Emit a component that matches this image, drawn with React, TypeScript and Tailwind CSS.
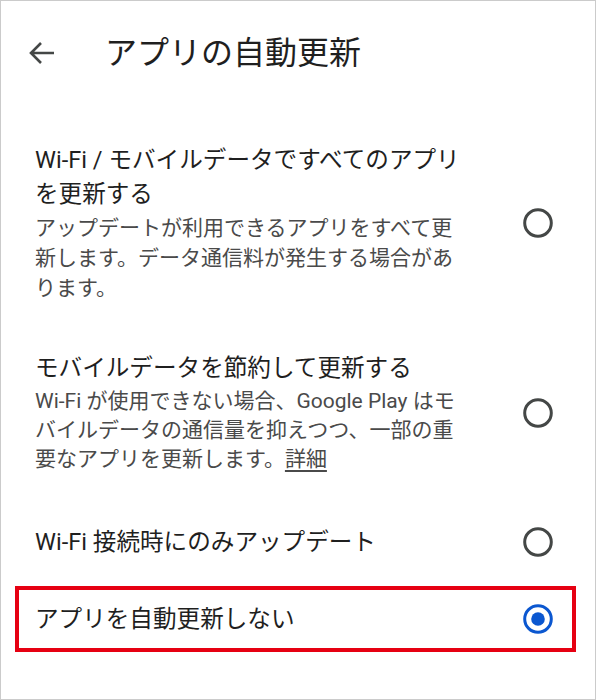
import React from 'react';

const font = { fontFamily: 'Roboto, "Noto Sans CJK JP", sans-serif' };

const Radio: React.FC<{ checked?: boolean }> = ({ checked }) => (
  <svg width="30" height="30" viewBox="0 0 30 30" className="shrink-0">
    {checked ? (
      <>
        <circle cx="15" cy="15" r="13.3" fill="none" stroke="#0b57d0" strokeWidth="3" />
        <circle cx="15" cy="15" r="6.8" fill="#0b57d0" />
      </>
    ) : (
      <circle cx="15" cy="15" r="13.3" fill="none" stroke="#444746" strokeWidth="3" />
    )}
  </svg>
);

interface Option {
  title: string[];
  desc?: React.ReactNode[];
  descLh?: string;
}

const options: Option[] = [
  {
    title: ['Wi-Fi / モバイルデータですべてのアプリ', 'を更新する'],
    desc: ['アップデートが利用できるアプリをすべて更', '新します。データ通信料が発生する場合があ', 'ります。'],
    descLh: 'leading-[30px]',
  },
  {
    title: ['モバイルデータを節約して更新する'],
    desc: [
      'Wi-Fi が使用できない場合、Google Play はモ',
      'バイルデータの通信量を抑えつつ、一部の重',
      <>要なアプリを更新します。<span className="underline underline-offset-4">詳細</span></>,
    ],
    descLh: 'leading-[29px]',
  },
];

export default function App() {
  return (
    <div className="w-[596px] h-[700px] border border-[#cbcbcb] bg-white overflow-hidden" style={font}>
      {/* Header */}
      <div className="h-[103px] flex items-center">
        <svg width="26" height="24" viewBox="0 0 26 24" className="ml-[27px]">
          <path d="M26 12H3.5M13 2L3 12l10 10" fill="none" stroke="#444746" strokeWidth="2.6" />
        </svg>
        <h1 className="ml-[51px] text-[32px] leading-[40px] text-[#1f1f1f] whitespace-nowrap">アプリの自動更新</h1>
      </div>

      <div className="pt-[39px]">
        {options.map((opt, i) => (
          <div key={i} className={`flex items-center pl-[34px] pr-[42px] ${i === 0 ? '' : 'mt-[48px]'}`}>
            <div className="flex-1">
              {opt.title.map((line, j) => (
                <div key={j} className="text-[23.6px] leading-[34px] text-[#1f1f1f] whitespace-nowrap">{line}</div>
              ))}
              <div className="mt-[2px]">
                {opt.desc?.map((line, j) => (
                  <div key={j} className={`text-[21px] ${opt.descLh} text-[#4a4a4a] whitespace-nowrap`}>{line}</div>
                ))}
              </div>
            </div>
            <Radio />
          </div>
        ))}

        <div className="flex items-center pl-[34px] pr-[42px] mt-[51px]">
          <div className="flex-1 text-[23.6px] leading-[34px] text-[#1f1f1f] whitespace-nowrap">Wi-Fi 接続時にのみアップデート</div>
          <Radio />
        </div>

        <div className="mt-[27px] ml-[14px] mr-[19px] h-[66px] border-4 border-[#e60012] flex items-center pl-[16px] pr-[19px]">
          <div className="flex-1 text-[23.6px] leading-[34px] text-[#1f1f1f] whitespace-nowrap">アプリを自動更新しない</div>
          <Radio checked />
        </div>
      </div>
    </div>
  );
}
